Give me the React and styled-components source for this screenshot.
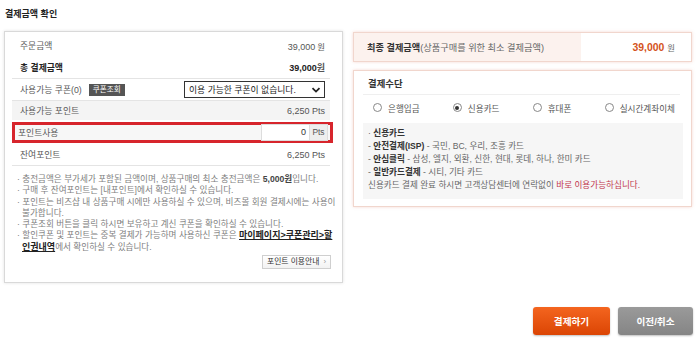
import React from 'react';
import styled, { createGlobalStyle, css } from 'styled-components';

const GlobalStyle = createGlobalStyle`
    html, body {
        margin: 0;
        padding: 0;
        background: #fff;
    }
    body {
        font-family: "Liberation Sans", "Noto Sans CJK KR", sans-serif;
        font-size: 8px;
        color: #555;
    }
`;

const Page = styled.div`
    width: 700px;
    height: 346px;
    box-sizing: border-box;
    padding: 8px 7px 0 4px;
`;

const Heading = styled.div`
    font-size: 9px;
    font-weight: bold;
    color: #222;
    line-height: 12px;
    padding-left: 1px;
    margin-bottom: 11px;
`;

const Columns = styled.div`
    display: grid;
    grid-template-columns: 339px 339px;
    column-gap: 10px;
    align-items: start;
`;

/* ---------- left panel ---------- */

const Panel = styled.div`
    box-sizing: border-box;
    border: 1px solid #d9d9d9;
    box-shadow: 0 0 3px rgba(0, 0, 0, 0.12);
    background: #fff;
    padding: 3px 12px 13px 7px;
`;

const Row = styled.div`
    display: flex;
    align-items: center;
    justify-content: space-between;
    height: ${p => p.$h || 21}px;
    padding: 0 5px 0 8px;
    color: #5a5a5a;
    ${p => p.$line && css`border-bottom: 1px solid #e4e4e4;`}
    ${p => p.$shade && css`background: #f4f4f4;`}
    ${p => p.$strong && css`
        color: #222;
        font-weight: bold;
    `}
`;

const Label = styled.span`
    display: flex;
    align-items: center;
    gap: 7px;
    font-size: 8.8px;
`;

const Value = styled.span`
    font-size: 9px;
    color: #555;
    b {
        color: #222;
    }
    small {
        font-size: 8.4px;
        margin-left: 2px;
    }
`;

const Badge = styled.span`
    background: #555;
    color: #fff;
    font-size: 7.6px;
    line-height: 12px;
    padding: 0 4px;
`;

const Select = styled.div`
    box-sizing: border-box;
    width: 141px;
    height: 17px;
    border: 1px solid #333;
    background: #fff;
    display: flex;
    align-items: center;
    justify-content: space-between;
    padding: 0 3px 0 4px;
    font-size: 8.8px;
    color: #222;
    svg {
        display: block;
    }
`;

const UseBox = styled.div`
    box-sizing: border-box;
    height: 21px;
    margin: 2px -3px 1px 0;
    border: 3px solid #d7252c;
    background: #f7f7f7;
    display: flex;
    align-items: center;
    justify-content: space-between;
    padding: 0 2px 0 3px;
    color: #5a5a5a;
`;

const UseInput = styled.div`
    display: flex;
    align-items: stretch;
    height: 15px;
    border: 1px solid #ddd;
`;

const Field = styled.span`
    width: 44px;
    background: #fff;
    text-align: right;
    padding-right: 3px;
    font-size: 9px;
    line-height: 15px;
    color: #333;
    border-right: 1px solid #ddd;
`;

const Unit = styled.span`
    width: 17px;
    text-align: center;
    background: #eee;
    font-size: 8.4px;
    line-height: 15px;
    color: #555;
`;

const Notes = styled.ul`
    list-style: none;
    margin: 8px -6px 0 5px;
    padding: 0;
    font-size: 8.6px;
    line-height: 11.3px;
    color: #808080;
    white-space: nowrap;
    li {
        padding-left: 5px;
        text-indent: -5px;
    }
    b {
        color: #444;
    }
`;

const Path = styled.b`
    font-size: 9px;
    color: #222 !important;
    text-decoration: underline;
`;

const GuideRow = styled.div`
    display: flex;
    justify-content: flex-end;
    margin-top: 2px;
    margin-right: -1px;
`;

const GuideButton = styled.span`
    box-sizing: border-box;
    height: 14px;
    width: 69px;
    border: 1px solid #cfcfcf;
    background: linear-gradient(#fff, #f2f2f2);
    font-size: 7.8px;
    line-height: 12px;
    color: #333;
    text-align: center;
    i {
        font-style: normal;
        color: #999;
        margin-left: 4px;
    }
`;

/* ---------- right side ---------- */

const Side = styled.div`
    padding-top: 1px;
    display: flex;
    flex-direction: column;
    gap: 8px;
`;

const PinkBox = styled.div`
    box-sizing: border-box;
    border: 1px solid #f1d6cd;
    box-shadow: 0 0 3px rgba(230, 150, 130, 0.35);
    background: #fff;
`;

const FinalBox = styled(PinkBox)`
    height: 30px;
    display: flex;
    align-items: stretch;
`;

const FinalLabel = styled.div`
    width: 214px;
    background: #fcf2ee;
    display: flex;
    align-items: center;
    padding-left: 13px;
    font-size: 9.2px;
    color: #666;
    b {
        color: #333;
    }
`;

const FinalValue = styled.div`
    flex: 1;
    display: flex;
    align-items: center;
    justify-content: flex-end;
    padding-right: 16px;
    font-size: 8.4px;
    color: #666;
    strong {
        font-size: 10.4px;
        color: #d4531c;
        margin-right: 3px;
    }
`;

const MethodBox = styled(PinkBox)`
    padding: 0 8px 7px 9px;
`;

const MethodTitle = styled.div`
    height: 23px;
    line-height: 25px;
    padding-left: 5px;
    margin-right: 3px;
    border-bottom: 1px solid #efefef;
    font-size: 9.4px;
    font-weight: bold;
    color: #333;
`;

const Radios = styled.div`
    height: 25px;
    display: flex;
    align-items: center;
    justify-content: space-between;
    padding: 0 8px 0 10px;
`;

const Radio = styled.label`
    display: flex;
    align-items: center;
    gap: 6px;
    font-size: 8.6px;
    color: #555;
`;

const Dot = styled.span`
    box-sizing: border-box;
    width: 9px;
    height: 9px;
    border-radius: 50%;
    border: 1px solid #888;
    background: #fff;
    display: flex;
    align-items: center;
    justify-content: center;
    &::after {
        content: '';
        width: 4px;
        height: 4px;
        border-radius: 50%;
        background: ${p => (p.$on ? '#333' : 'transparent')};
    }
`;

const CardInfo = styled.div`
    margin-top: 3px;
    background: #f6f6f6;
    padding: 4px 5px 7px;
    font-size: 8.6px;
    line-height: 13px;
    color: #666;
    white-space: nowrap;
    b {
        color: #333;
    }
    em {
        font-style: normal;
        color: #c2374e;
    }
`;

/* ---------- buttons ---------- */

const Actions = styled.div`
    display: flex;
    justify-content: flex-end;
    gap: 8px;
    margin-top: 24px;
`;

const Action = styled.button`
    box-sizing: border-box;
    height: 28px;
    width: ${p => p.$w}px;
    border: none;
    border-radius: 3px;
    font-family: inherit;
    font-size: 9.6px;
    font-weight: bold;
    color: #fff;
    background: ${p => (p.$primary
        ? 'linear-gradient(#f4651f, #db4504)'
        : 'linear-gradient(#9a9a9a, #858585)')};
    box-shadow: 0 1px 2px rgba(0, 0, 0, 0.25);
    padding: 0;
`;

const Chevron = () => (
    <svg width="10" height="10" viewBox="0 0 10 10">
        <path d="M1.5 3.2 L5 6.6 L8.5 3.2" fill="none" stroke="#222" strokeWidth="1.8" />
    </svg>
);

const App = () => {
    return (
        <>
            <GlobalStyle />
            <Page>
                <Heading>결제금액 확인</Heading>
                <Columns>
                    <Panel>
                        <Row>
                            <Label>주문금액</Label>
                            <Value>39,000<small>원</small></Value>
                        </Row>
                        <Row $h={22} $line $strong>
                            <Label>총 결제금액</Label>
                            <Value><b>39,000</b>원</Value>
                        </Row>
                        <Row $line>
                            <Label>사용가능 쿠폰(0) <Badge>쿠폰조회</Badge></Label>
                            <Select>이용 가능한 쿠폰이 없습니다. <Chevron /></Select>
                        </Row>
                        <Row $h={19} $shade>
                            <Label>사용가능 포인트</Label>
                            <Value>6,250 Pts</Value>
                        </Row>
                        <UseBox>
                            <Label>포인트사용</Label>
                            <UseInput>
                                <Field>0</Field>
                                <Unit>Pts</Unit>
                            </UseInput>
                        </UseBox>
                        <Row $line>
                            <Label>잔여포인트</Label>
                            <Value>6,250 Pts</Value>
                        </Row>
                        <Notes>
                            <li>· 충전금액은 부가세가 포함된 금액이며, 상품구매의 최소 충전금액은 <b>5,000원</b>입니다.</li>
                            <li>· 구매 후 잔여포인트는 [내포인트]에서 확인하실 수 있습니다.</li>
                            <li>· 포인트는 비즈샵 내 상품구매 시에만 사용하실 수 있으며, 비즈몰 회원 결제시에는 사용이<br />불가합니다.</li>
                            <li>· 쿠폰조회 버튼을 클릭 하시면 보유하고 계신 쿠폰을 확인하실 수 있습니다.</li>
                            <li>· 할인쿠폰 및 포인트는 중복 결제가 가능하며 사용하신 쿠폰은 <Path>마이페이지&gt;쿠폰관리&gt;할<br />인권내역</Path>에서 확인하실 수 있습니다.</li>
                        </Notes>
                        <GuideRow>
                            <GuideButton>포인트 이용안내<i>›</i></GuideButton>
                        </GuideRow>
                    </Panel>

                    <Side>
                        <FinalBox>
                            <FinalLabel><b>최종 결제금액</b>(상품구매를 위한 최소 결제금액)</FinalLabel>
                            <FinalValue><strong>39,000</strong>원</FinalValue>
                        </FinalBox>
                        <MethodBox>
                            <MethodTitle>결제수단</MethodTitle>
                            <Radios>
                                <Radio><Dot />은행입금</Radio>
                                <Radio><Dot $on />신용카드</Radio>
                                <Radio><Dot />휴대폰</Radio>
                                <Radio><Dot />실시간계좌이체</Radio>
                            </Radios>
                            <CardInfo>
                                <div>· <b>신용카드</b></div>
                                <div>- <b>안전결제(ISP)</b> - 국민, BC, 우리, 조흥 카드</div>
                                <div>- <b>안심클릭</b> - 삼성, 엘지, 외환, 신한, 현대, 롯데, 하나, 한미 카드</div>
                                <div>- <b>일반카드결제</b> - 시티, 기타 카드</div>
                                <div>신용카드 결제 완료 하시면 고객상담센터에 연락없이 <em>바로 이용가능하십니다.</em></div>
                            </CardInfo>
                        </MethodBox>
                    </Side>
                </Columns>
                <Actions>
                    <Action $primary $w={77}>결제하기</Action>
                    <Action $w={75}>이전/취소</Action>
                </Actions>
            </Page>
        </>
    );
};

export default App;
